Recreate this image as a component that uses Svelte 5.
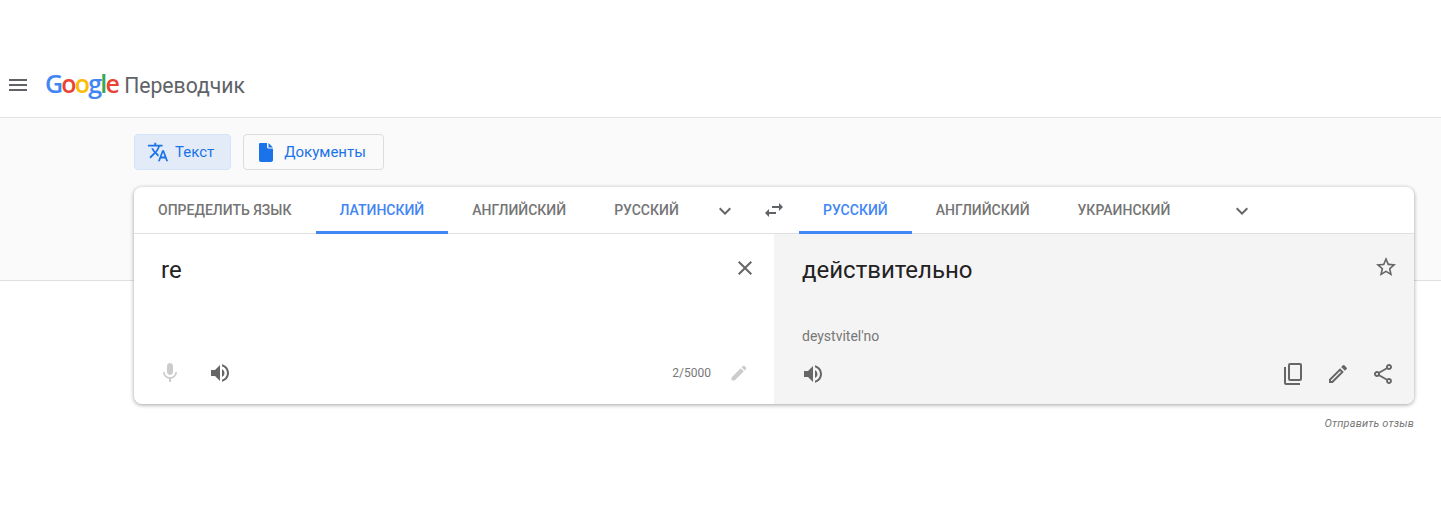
<script>
  const sourceTabs = [
    { label: "Определить язык" },
    { label: "Латинский", active: true },
    { label: "Английский" },
    { label: "Русский" }
  ];
  const targetTabs = [
    { label: "Русский", active: true },
    { label: "Английский" },
    { label: "Украинский" }
  ];
</script>

<header class="header">
  <button class="menu" aria-label="Меню">
    <svg width="24" height="24" viewBox="0 0 24 24"><path fill="#5f6368" d="M3 18h18v-2H3v2zm0-5h18v-2H3v2zm0-7v2h18V6H3z" /></svg>
  </button>
  <div class="logo">
    <span class="google"><span class="blue">G</span><span class="red">o</span><span class="yellow">o</span><span class="blue">g</span><span class="green">l</span><span class="red">e</span></span>
    <span class="product">Переводчик</span>
  </div>
</header>

<section class="band">
  <div class="modes">
    <button class="mode active">
      <svg width="22" height="22" viewBox="0 0 24 24"><path fill="#1a73e8" d="M12.87 15.07l-2.54-2.51.03-.03A17.52 17.52 0 0 0 14.07 6H17V4h-7V2H8v2H1v2h11.17C11.5 7.920 10.440 9.750 9 11.350 8.070 10.320 7.300 9.190 6.690 8h-2c.73 1.630 1.730 3.170 2.980 4.560l-5.090 5.020L4 19l5-5 3.110 3.110.76-2.040zM18.500 10h-2L12 22h2l1.120-3h4.750L21 22h2l-4.500-12zm-2.620 7l1.620-4.330L19.120 17h-3.240z" /></svg>
      Текст
    </button>
    <button class="mode doc">
      <svg width="20" height="24" viewBox="0 0 20 24"><path fill="#1a73e8" d="M4 3C3.200 3 3 3.700 3 4.500V20c0 1.100.9 2 2 2h10c1.100 0 2-.9 2-2V9l-1-.5h-3.500c-.8 0-1.500-.7-1.500-1.500V3.500L11 3H4z" /><path fill="#1a73e8" d="M12.500 3l4.500 4.500h-4.500z" /></svg>
      Документы
    </button>
  </div>

  <div class="card">
    <div class="tabs-row">
      <div class="tabs source">
        {#each sourceTabs as tab}
          <div class="tab" class:active={tab.active}>{tab.label}</div>
        {/each}
        <svg class="chevron" width="24" height="24" viewBox="0 0 24 24"><path fill="#666" d="M7.410 8.590L12 13.170l4.590-4.580L18 10l-6 6-6-6z" /></svg>
      </div>
      <svg class="swap" width="24" height="24" viewBox="0 0 24 24"><path fill="#5f6368" d="M6.990 11L3 15l3.990 4v-3H14v-2H6.990v-3zM21 9l-3.990-4v3H10v2h7.010v3L21 9z" /></svg>
      <div class="tabs target">
        {#each targetTabs as tab}
          <div class="tab" class:active={tab.active}>{tab.label}</div>
        {/each}
        <svg class="chevron far" width="24" height="24" viewBox="0 0 24 24"><path fill="#666" d="M7.410 8.590L12 13.170l4.590-4.580L18 10l-6 6-6-6z" /></svg>
      </div>
    </div>

    <div class="panes">
      <div class="pane left">
        <div class="main-line">
          <div class="big">re</div>
          <svg width="24" height="24" viewBox="0 0 24 24"><path fill="#666" d="M19 6.410L17.590 5 12 10.590 6.410 5 5 6.410 10.590 12 5 17.590 6.410 19 12 13.410 17.590 19 19 17.590 13.410 12z" /></svg>
        </div>
        <div class="actions">
          <svg width="24" height="24" viewBox="0 0 24 24"><path fill="#ccc" d="M12 14c1.660 0 3-1.340 3-3V5c0-1.660-1.340-3-3-3S9 3.340 9 5v6c0 1.660 1.340 3 3 3zm5.300-3c0 3-2.540 5.100-5.300 5.100S6.700 14 6.700 11H5c0 3.410 2.720 6.230 6 6.720V21h2v-3.280c3.280-.48 6-3.300 6-6.720h-1.700z" /></svg>
          <svg class="speaker" width="24" height="24" viewBox="0 0 24 24"><path fill="#666" d="M3 9v6h4l5 5V4L7 9H3zm13.500 3A4.500 4.500 0 0 0 14 7.970v8.050c1.480-.73 2.500-2.250 2.500-4.020zM14 3.230v2.060c2.890.86 5 3.540 5 6.710s-2.110 5.850-5 6.710v2.060c4.010-.91 7-4.490 7-8.770s-2.990-7.860-7-8.770z" /></svg>
          <span class="count">2/5000</span>
          <svg class="faint-pen" width="20" height="20" viewBox="0 0 24 24"><path fill="#ccc" d="M3 17.250V21h3.750L17.810 9.940l-3.750-3.750L3 17.250zM20.710 7.040a1 1 0 0 0 0-1.410l-2.340-2.340a1 1 0 0 0-1.410 0l-1.830 1.830 3.750 3.750 1.830-1.830z" /></svg>
        </div>
      </div>
      <div class="pane right">
        <div class="main-line">
          <div class="big">действительно</div>
          <svg class="star" width="24" height="24" viewBox="0 0 24 24"><path fill="#666" d="M22 9.240l-7.190-.62L12 2 9.190 8.630 2 9.240l5.460 4.730L5.820 21 12 17.270 18.180 21l-1.630-7.030L22 9.240zM12 15.400l-3.760 2.270 1-4.280-3.320-2.880 4.380-.38L12 6.100l1.710 4.040 4.380.38-3.320 2.880 1 4.280L12 15.400z" /></svg>
        </div>
        <div class="translit">deystvitel'no</div>
        <div class="actions">
          <svg class="speaker" width="24" height="24" viewBox="0 0 24 24"><path fill="#666" d="M3 9v6h4l5 5V4L7 9H3zm13.500 3A4.500 4.500 0 0 0 14 7.970v8.050c1.480-.73 2.500-2.250 2.500-4.020zM14 3.230v2.060c2.890.86 5 3.540 5 6.710s-2.110 5.850-5 6.710v2.060c4.010-.91 7-4.490 7-8.770s-2.990-7.860-7-8.770z" /></svg>
          <svg class="tool" width="24" height="24" viewBox="0 0 24 24"><path fill="#666" d="M3 5h2v16h14v2H5a2 2 0 0 1-2-2V5zm6-4h10a2 2 0 0 1 2 2v14a2 2 0 0 1-2 2H9a2 2 0 0 1-2-2V3a2 2 0 0 1 2-2zm0 2v14h10V3H9z" /></svg>
          <svg class="tool" width="24" height="24" viewBox="0 0 24 24"><path fill="#666" d="M3 17.250V21h3.750L17.810 9.940l-3.750-3.750L3 17.250zM5.920 19H5v-.92l9.060-9.060.92.92L5.920 19zM20.710 5.630l-2.340-2.340a1 1 0 0 0-1.410 0l-1.830 1.830 3.750 3.750 1.830-1.830a1 1 0 0 0 0-1.410z" /></svg>
          <svg class="tool" width="24" height="24" viewBox="0 0 24 24"><path fill="#666" d="M18 16.080c-.76 0-1.440.3-1.960.77L8.910 12.700c.05-.23.090-.46.090-.7s-.04-.47-.09-.7l7.050-4.110c.54.5 1.250.81 2.040.81 1.660 0 3-1.340 3-3s-1.340-3-3-3-3 1.340-3 3c0 .24.04.47.09.7L8.040 9.810C7.500 9.310 6.790 9 6 9c-1.660 0-3 1.340-3 3s1.340 3 3 3c.79 0 1.500-.31 2.040-.81l7.120 4.160c-.05.21-.08.43-.08.650 0 1.610 1.310 2.920 2.920 2.920 1.610 0 2.920-1.310 2.920-2.920s-1.310-2.920-2.920-2.920zM18 4c.55 0 1 .45 1 1s-.45 1-1 1-1-.45-1-1 .45-1 1-1zM6 13c-.55 0-1-.45-1-1s.45-1 1-1 1 .45 1 1-.45 1-1 1zm12 7.020c-.55 0-1-.45-1-1s.45-1 1-1 1 .45 1 1-.45 1-1 1z" /></svg>
        </div>
      </div>
    </div>
  </div>
  <div class="feedback">Отправить отзыв</div>
</section>

<style>
  :global(body) {
    margin: 0;
    background: #fff;
    font-family: Roboto, "Liberation Sans", sans-serif;
  }

  button {
    font: inherit;
    cursor: pointer;
  }

  svg {
    display: block;
    flex: none;
  }

  .header {
    height: 117px;
    border-bottom: 1px solid #e0e0e0;
    display: flex;
    align-items: center;
    padding-left: 6px;
  }

  .menu {
    border: 0;
    background: none;
    padding: 0;
    margin-top: 52px;
    width: 24px;
    height: 24px;
  }

  .logo {
    margin: 52px 0 0 15px;
    display: flex;
    align-items: baseline;
    line-height: 30px;
  }

  .google {
    font-family: "Open Sans", sans-serif;
    font-size: 25px;
    font-weight: 550;
    letter-spacing: -1.8px;
  }

  .blue { color: #4285f4; }
  .red { color: #ea4335; }
  .yellow { color: #fbbc05; }
  .green { color: #34a853; }

  .product {
    margin-left: 6px;
    font-size: 21.2px;
    color: #5f6368;
  }

  /* band is 162px tall, its bottom line runs behind the card */
  .band {
    padding: 16px 26px 20px 134px;
    background: linear-gradient(#fafafa 162px, #e0e0e0 162px, #e0e0e0 163px, #fff 163px);
  }

  .modes {
    display: flex;
    gap: 12px;
  }

  .mode {
    height: 36px;
    box-sizing: border-box;
    display: flex;
    align-items: center;
    gap: 6px;
    padding: 0 16px 0 12px;
    background: #fafafa;
    border: 1px solid #dadce0;
    border-radius: 4px;
    font-size: 15px;
    color: #1a73e8;
  }

  .mode.doc {
    gap: 8px;
    padding-right: 17px;
  }

  .mode.active {
    background: #e3ebf8;
    border-color: #d2e3fc;
  }

  .card {
    margin-top: 17px;
    width: 1280px;
    height: 217px;
    background: #fff;
    border-radius: 8px;
    box-shadow: 0 1px 4px 0 rgba(0, 0, 0, 0.37);
    overflow: hidden;
    display: flex;
    flex-direction: column;
  }

  .tabs-row {
    height: 46px;
    flex: none;
    display: flex;
    border-bottom: 1px solid #e0e0e0;
  }

  .tabs {
    display: flex;
    align-items: stretch;
  }

  .source {
    width: 628px;
  }

  .swap {
    margin-top: 11px;
  }

  .target {
    margin-left: 13px;
  }

  .tab {
    padding: 1px 24px 0;
    display: flex;
    align-items: center;
    font-size: 14px;
    font-weight: 500;
    text-transform: uppercase;
    color: #757575;
    border-bottom: 3px solid transparent;
    margin-bottom: -1px;
    white-space: nowrap;
  }

  .tab.active {
    color: #4285f4;
    border-bottom-color: #4285f4;
  }

  .chevron {
    margin: 12px 0 0 10px;
  }

  .chevron.far {
    margin-left: 36px;
  }

  .panes {
    flex: 1;
    display: flex;
    min-height: 0;
  }

  .pane {
    width: 640px;
    box-sizing: border-box;
    display: flex;
    flex-direction: column;
  }

  .left {
    padding: 22px 17px 0 27px;
  }

  .right {
    background: #f4f4f4;
    padding: 22px 16px 0 28px;
  }

  .main-line {
    display: flex;
    justify-content: space-between;
    align-items: flex-start;
  }

  .star {
    margin-top: -1px;
  }

  .big {
    font-size: 24px;
    line-height: 28px;
    color: #222;
  }

  .translit {
    margin-top: 42px;
    font-size: 14px;
    line-height: 20px;
    color: #777;
  }

  .actions {
    margin: auto 0 19px;
    display: flex;
    align-items: center;
  }

  .left .actions {
    margin-left: -3px;
  }

  .right .actions {
    margin-left: -1px;
    margin-right: 3px;
    margin-bottom: 18px;
  }

  .speaker {
    margin-left: 26px;
  }

  .right .speaker {
    margin-left: 0;
    margin-right: auto;
  }

  .count {
    margin-left: auto;
    font-size: 12px;
    color: #777;
  }

  .faint-pen {
    margin-left: 18px;
    margin-right: 8px;
  }

  .tool {
    margin-left: 21px;
  }

  .feedback {
    margin-top: 13px;
    width: 1280px;
    text-align: right;
    font-size: 11px;
    letter-spacing: 0.15px;
    font-style: italic;
    color: #777;
  }
</style>
